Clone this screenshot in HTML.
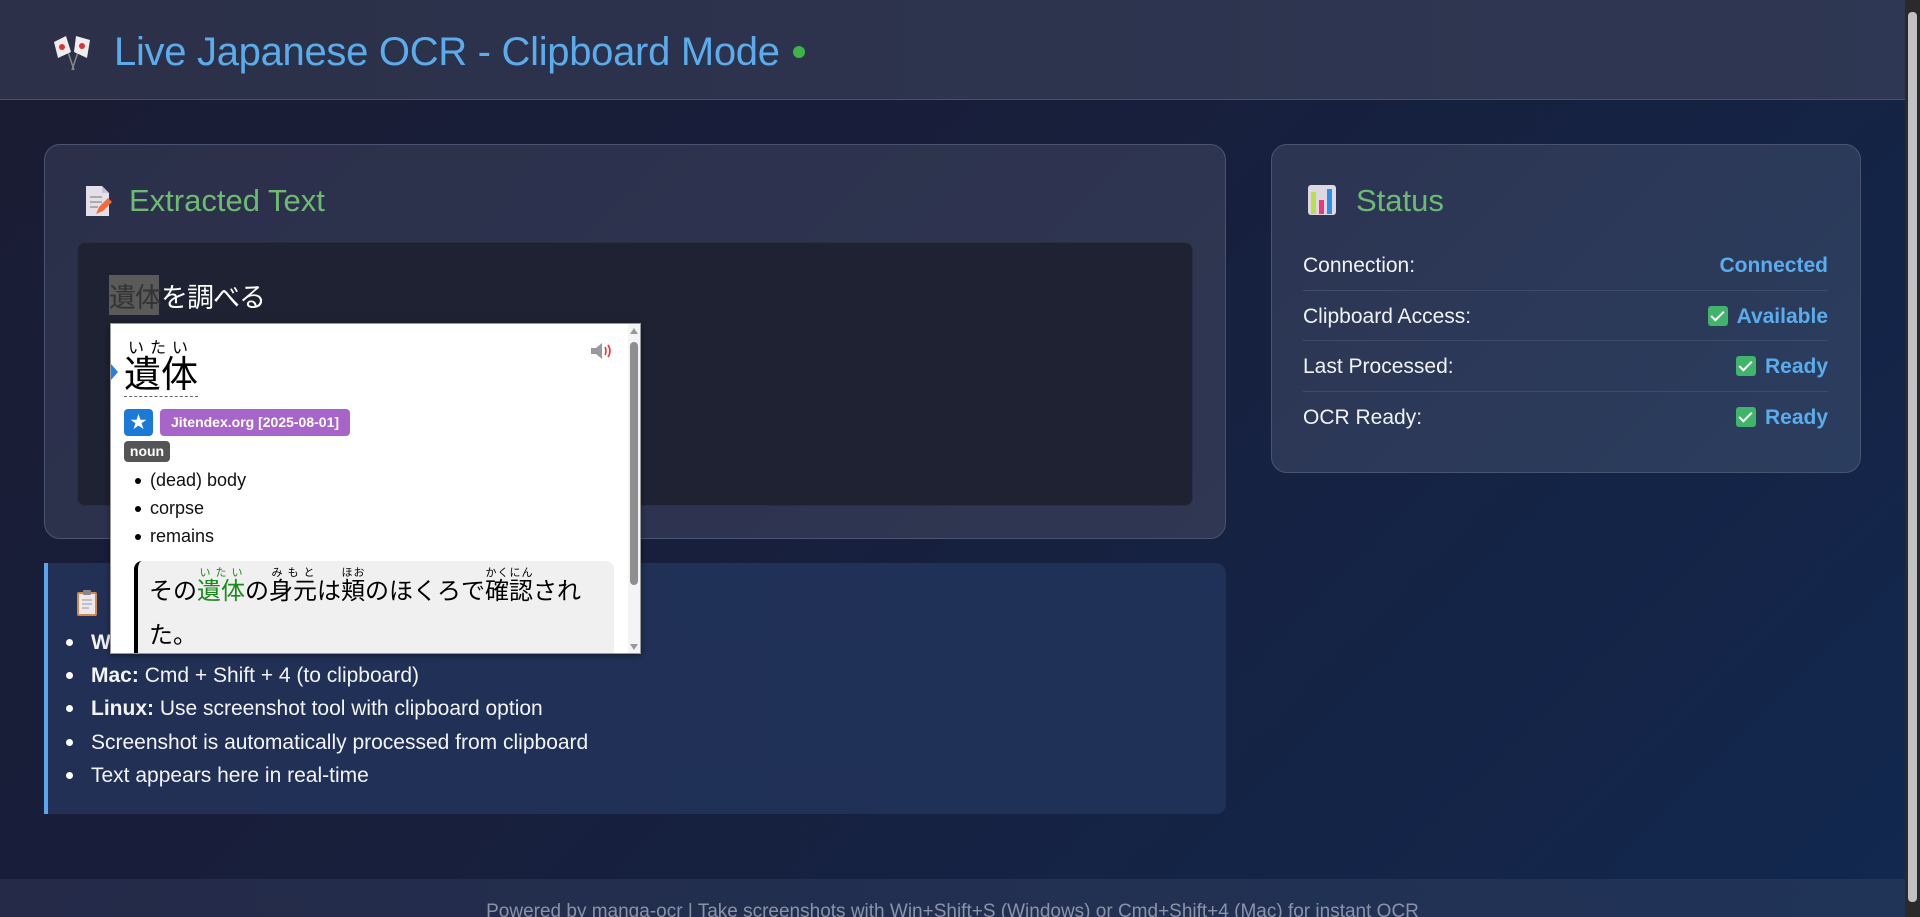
<!DOCTYPE html>
<html><head><meta charset="utf-8">
<style>
*{margin:0;padding:0;box-sizing:border-box}
html,body{width:1920px;height:917px;overflow:hidden}
body{font-family:"Liberation Sans","Noto Sans CJK JP",sans-serif;background:linear-gradient(135deg,#1a1c33 0%,#171f3c 45%,#12284f 100%);position:relative;color:#fff}
.abs{position:absolute}
.header{left:0;top:0;width:1905px;height:100px;background:linear-gradient(90deg,#2c3048,#2e3753);border-bottom:1px solid #4b5168}
.title{left:114px;top:30px;font-size:40px;color:#5aacec;white-space:nowrap;letter-spacing:-0.3px}
.dot{left:793px;top:46px;width:12px;height:12px;border-radius:50%;background:#3fb24a}
.card{border:1px solid #4a5472;border-radius:16px;background:linear-gradient(135deg,#2b2f4a,#2f3752)}
.h2{font-size:31px;color:#6dbb72}
.inner{left:77px;top:242px;width:1116px;height:264px;background:#1f2233;border-radius:8px;border:1px solid #2a2e42}
.row{position:absolute;left:0;width:525px;font-size:21px;color:#f0f2f6}
.row .v{position:absolute;right:0;top:0;color:#5aacec;font-weight:bold}
.chk{display:inline-block;width:20px;height:20px;background:#3fb56b;border-radius:3px;vertical-align:-3px;margin-right:9px;position:relative}
.chk:after{content:"";position:absolute;left:6px;top:2px;width:5px;height:11px;border:solid #fff;border-width:0 2px 2px 0;transform:rotate(45deg)}
.sep{position:absolute;left:0;width:525px;height:1px;background:#3f4b68}
.instr{left:44px;top:563px;width:1182px;height:251px;background:linear-gradient(90deg,#223056,#1f3157);border-left:4px solid #5aa6ee;border-radius:0 10px 10px 0}
.li{position:absolute;left:43px;font-size:21px;color:#f2f4f8;white-space:nowrap}
.li:before{content:"";position:absolute;left:-25px;top:8px;width:7px;height:7px;border-radius:50%;background:#fff}
.footer{left:0;top:879px;width:1905px;height:38px;background:linear-gradient(90deg,#242a48,#203458);color:#8a93a8;font-size:19px;text-align:center;padding-top:22px;white-space:nowrap}
.sb{left:1905px;top:0;width:15px;height:917px;background:#2a2a2a}
.popup{left:110px;top:323px;width:531px;height:331px;background:#fff;border:1px solid #999;box-shadow:0 2px 6px rgba(0,0,0,.4);overflow:hidden;color:#000}
.tag{position:absolute;color:#fff;font-weight:bold;border-radius:4px;text-align:center}
.pli{position:absolute;left:39px;font-size:18px;color:#111}
.pli:before{content:"";position:absolute;left:-15px;top:8px;width:6px;height:6px;border-radius:50%;background:#000}
.ex{left:23px;top:237px;width:480px;height:110px;background:#f0f0f0;border-left:4px solid #000;border-radius:8px}
ruby rt{font-size:11px}
</style></head><body>
<div class="abs header"></div>
<svg class="abs" style="left:50px;top:32px" width="46" height="40" viewBox="0 0 46 40">
<line x1="14" y1="8" x2="24" y2="38" stroke="#888" stroke-width="1.5"/><line x1="32" y1="8" x2="22" y2="38" stroke="#888" stroke-width="1.5"/>
<path d="M4 10 L16 4 L21 20 L8 26 Z" fill="#eee"/><circle cx="12" cy="15" r="3" fill="#e0303a"/>
<path d="M26 4 L40 8 L37 26 L24 20 Z" fill="#eee"/><circle cx="32" cy="14" r="3" fill="#e0303a"/>
</svg>
<div class="abs title">Live Japanese OCR - Clipboard Mode</div>
<div class="abs dot"></div>

<div class="abs card" style="left:44px;top:144px;width:1182px;height:395px"></div>
<svg class="abs" style="left:84px;top:185px" width="30" height="32" viewBox="0 0 30 32"><path d="M2 1h16l7 7v23H2z" fill="#e4e0ea"/><path d="M18 1v7h7" fill="#c9c3d4"/><g stroke="#999" stroke-width="1.5"><line x1="6" y1="12" x2="18" y2="12"/><line x1="6" y1="17" x2="18" y2="17"/><line x1="6" y1="22" x2="14" y2="22"/></g><path d="M12 29l3-7 9-9 4 4-9 9z" fill="#f26b3a"/></svg>
<div class="abs h2" style="left:129px;top:183px">Extracted Text</div>
<div class="abs inner"></div>
<div class="abs" style="left:109px;top:275px;width:50px;height:40px;background:#5a5a5a"></div>
<div class="abs" style="left:109px;top:276px;font-size:27px;color:#fff;letter-spacing:-1px"><span style="color:#333">遺体</span>を調べる</div>

<div class="abs card" style="left:1271px;top:144px;width:590px;height:329px;background:linear-gradient(135deg,#2c3552,#2b3d5e)"></div>
<svg class="abs" style="left:1307px;top:184px" width="30" height="32" viewBox="0 0 30 32"><rect x="1" y="1" width="28" height="30" rx="3" fill="#ddd8e4"/><rect x="4" y="8" width="5" height="22" fill="#b8e04a"/><rect x="12" y="16" width="5" height="14" fill="#e8387a"/><rect x="20" y="5" width="5" height="25" fill="#2d8fe8"/></svg>
<div class="abs h2" style="left:1356px;top:183px">Status</div>
<div class="abs" style="left:1303px;top:254px">
 <div class="row" style="top:0">Connection:<span class="v">Connected</span></div>
 <div class="sep" style="top:36px"></div>
 <div class="row" style="top:51px">Clipboard Access:<span class="v"><span class="chk"></span>Available</span></div>
 <div class="sep" style="top:86px"></div>
 <div class="row" style="top:101px">Last Processed:<span class="v"><span class="chk"></span>Ready</span></div>
 <div class="sep" style="top:137px"></div>
 <div class="row" style="top:152px">OCR Ready:<span class="v"><span class="chk"></span>Ready</span></div>
</div>

<div class="abs instr">
 <svg class="abs" style="left:28px;top:26px" width="22" height="28" viewBox="0 0 22 28"><rect x="1" y="3" width="20" height="24" rx="2" fill="#d8874a"/><rect x="3" y="5" width="16" height="20" fill="#ece8ee"/><rect x="7" y="1" width="8" height="5" rx="1" fill="#888"/><g stroke="#999"><line x1="6" y1="11" x2="16" y2="11"/><line x1="6" y1="15" x2="16" y2="15"/><line x1="6" y1="19" x2="13" y2="19"/></g></svg>
 <div class="li" style="top:68px"><b>Windows:</b> Win + Shift + S</div>
 <div class="li" style="top:101px"><b>Mac:</b> Cmd + Shift + 4 (to clipboard)</div>
 <div class="li" style="top:134px"><b>Linux:</b> Use screenshot tool with clipboard option</div>
 <div class="li" style="top:168px">Screenshot is automatically processed from clipboard</div>
 <div class="li" style="top:201px">Text appears here in real-time</div>
</div>

<div class="abs popup">
 <div class="abs" style="left:0;top:40px;width:0;height:0;border-top:8px solid transparent;border-bottom:8px solid transparent;border-left:7px solid #2a7de0"></div>
 <div class="abs" style="left:17px;top:10px;font-size:16px;letter-spacing:6px">いたい</div>
 <div class="abs" style="left:13px;top:30px;font-size:37px;line-height:42px;border-bottom:1px dashed #666">遺体</div>
 <svg class="abs" style="left:478px;top:17px" width="24" height="20" viewBox="0 0 24 20"><path d="M2 7h5l6-5v16l-6-5H2z" fill="#999"/><path d="M16 6q2 4 0 8M19 4q4 6 0 12" stroke="#e33" stroke-width="1.6" fill="none"/></svg>
 <div class="tag" style="left:13px;top:85px;width:29px;height:27px;background:#1a7ad8;font-size:17px;line-height:27px">★</div>
 <div class="tag" style="left:49px;top:85px;width:190px;height:27px;background:#a865c9;font-size:14px;line-height:27px">Jitendex.org [2025-08-01]</div>
 <div class="tag" style="left:13px;top:117px;width:46px;height:21px;background:#555;font-size:14px;line-height:21px">noun</div>
 <div class="pli" style="top:146px">(dead) body</div>
 <div class="pli" style="top:174px">corpse</div>
 <div class="pli" style="top:202px">remains</div>
 <div class="abs ex">
  <div style="position:absolute;left:11px;top:6px;font-size:24px;line-height:44px;width:450px">その<ruby style="color:#1a8a1a">遺体<rt>いたい</rt></ruby>の<ruby>身元<rt>みもと</rt></ruby>は<ruby>頬<rt>ほお</rt></ruby>のほくろで<ruby>確認<rt>かくにん</rt></ruby>された。</div>
 </div>
 <div class="abs" style="left:517px;top:0;width:13px;height:331px;background:#f4f4f4"></div>
 <div class="abs" style="left:519px;top:18px;width:8px;height:243px;background:#8e8e8e;border-radius:4px"></div>
 <div class="abs" style="left:519px;top:4px;width:0;height:0;border-left:4px solid transparent;border-right:4px solid transparent;border-bottom:6px solid #999"></div>
 <div class="abs" style="left:519px;top:320px;width:0;height:0;border-left:4px solid transparent;border-right:4px solid transparent;border-top:6px solid #999"></div>
</div>

<div class="abs footer">Powered by manga-ocr | Take screenshots with Win+Shift+S (Windows) or Cmd+Shift+4 (Mac) for instant OCR</div>
<div class="abs sb"><div class="abs" style="left:3px;top:12px;width:9px;height:890px;background:#c1c1c1;border-radius:4px"></div></div>
</body></html>
